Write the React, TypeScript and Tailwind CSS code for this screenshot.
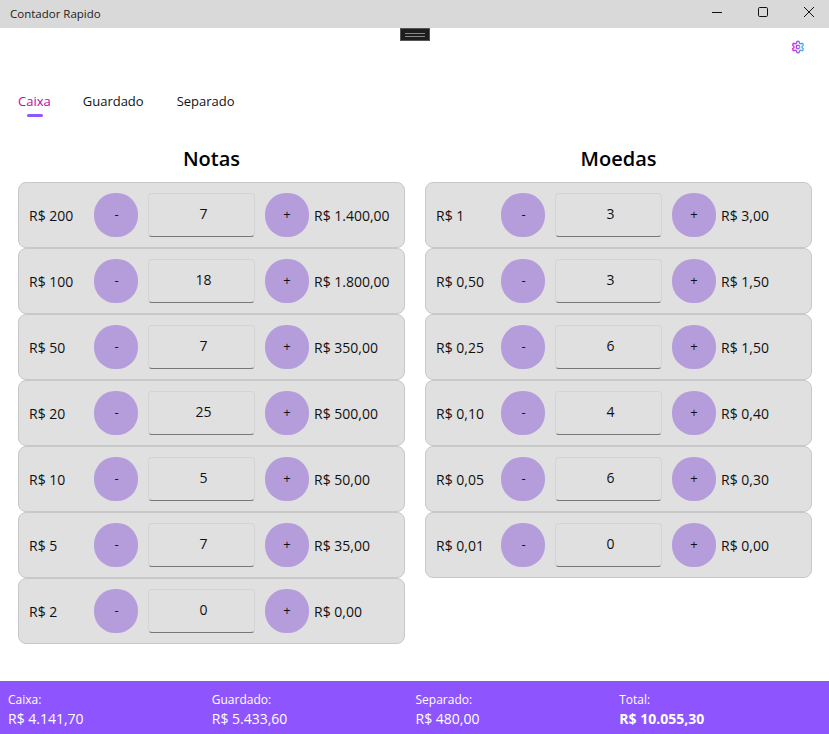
const notas = [
  { label: "R$ 200", count: "7", total: "R$ 1.400,00" },
  { label: "R$ 100", count: "18", total: "R$ 1.800,00" },
  { label: "R$ 50", count: "7", total: "R$ 350,00" },
  { label: "R$ 20", count: "25", total: "R$ 500,00" },
  { label: "R$ 10", count: "5", total: "R$ 50,00" },
  { label: "R$ 5", count: "7", total: "R$ 35,00" },
  { label: "R$ 2", count: "0", total: "R$ 0,00" },
];

const moedas = [
  { label: "R$ 1", count: "3", total: "R$ 3,00" },
  { label: "R$ 0,50", count: "3", total: "R$ 1,50" },
  { label: "R$ 0,25", count: "6", total: "R$ 1,50" },
  { label: "R$ 0,10", count: "4", total: "R$ 0,40" },
  { label: "R$ 0,05", count: "6", total: "R$ 0,30" },
  { label: "R$ 0,01", count: "0", total: "R$ 0,00" },
];

const totals = [
  { label: "Caixa:", value: "R$ 4.141,70" },
  { label: "Guardado:", value: "R$ 5.433,60" },
  { label: "Separado:", value: "R$ 480,00" },
  { label: "Total:", value: "R$ 10.055,30", bold: true },
];

interface RowProps {
  label: string;
  count: string;
  total: string;
}

function Row({ label, count, total }: RowProps) {
  return (
    <div className="flex h-[66px] items-center rounded-[8px] border border-[#c8c8c8] bg-[#e0e0e0] pl-[10px] text-[14px] text-[#111]">
      <span className="w-[65px]">{label}</span>
      <button className="flex size-[44px] items-center justify-center rounded-[21px] bg-[#b59ddc] pl-[1px] text-[13px]">
        -
      </button>
      <div className="mx-[10px] flex h-[44px] w-[107px] items-center justify-center rounded-[4px] border border-[#d4d4d4] border-b-[#777] pb-[4px] pl-[4px] text-[14px]">
        {count}
      </div>
      <button className="flex size-[44px] items-center justify-center rounded-[21px] bg-[#b59ddc] text-[13px]">
        +
      </button>
      <span className="ml-[5px]">{total}</span>
    </div>
  );
}

function Column({ title, rows }: { title: string; rows: RowProps[] }) {
  return (
    <div className="flex flex-col">
      <h2 className="mb-[8px] h-[30px] text-center text-[20px] leading-[30px] font-semibold text-black">
        {title}
      </h2>
      {rows.map((row) => (
        <Row key={row.label} {...row} />
      ))}
    </div>
  );
}

function App() {
  return (
    <div className="relative flex h-[734px] w-[829px] flex-col overflow-hidden bg-white font-['Open_Sans',sans-serif]">
      <div className="flex h-[28px] shrink-0 items-center justify-between bg-[#d9d9d9] pl-[10px] text-[11.5px] text-[#222]">
        <span className="pb-[1px]">Contador Rapido</span>
        <div className="flex translate-x-[3px] items-center">
          <div className="flex h-[28px] w-[46px] items-center justify-center pb-[5px]">
            <svg width="10" height="10" viewBox="0 0 10 10" fill="none" stroke="#111" strokeWidth="1">
              <path d="M0 5.5h10" />
            </svg>
          </div>
          <div className="flex h-[28px] w-[46px] items-center justify-center pb-[5px]">
            <svg width="10" height="10" viewBox="0 0 10 10" fill="none" stroke="#111" strokeWidth="1">
              <rect x="0.5" y="0.5" width="9" height="9" rx="1.2" />
            </svg>
          </div>
          <div className="flex h-[28px] w-[46px] items-center justify-center pb-[5px]">
            <svg width="10" height="10" viewBox="0 0 10 10" fill="none" stroke="#111" strokeWidth="1">
              <path d="M0 0l10 10M10 0L0 10" />
            </svg>
          </div>
        </div>
      </div>

      {/* debug toolbar collapsed at the top of the window */}
      <div className="absolute top-[28px] left-[400px] flex h-[13px] w-[30px] items-center justify-center border border-[#555] bg-[#1e1e1e]">
        <div className="h-[4px] w-[20px] border-y border-[#888]" />
      </div>

      <div className="flex h-[40px] shrink-0 justify-end pt-[12px] pr-[24px]">
        <svg width="14" height="14" viewBox="0 0 24 24" fill="none" strokeWidth="2.4" stroke="url(#gear)">
          <defs>
            <linearGradient id="gear" x1="0" y1="0" x2="1" y2="0">
              <stop offset="0" stopColor="#e023e0" />
              <stop offset="0.5" stopColor="#8f5cff" />
              <stop offset="1" stopColor="#35c5f0" />
            </linearGradient>
          </defs>
          <path d="M12.22 2h-.44a2 2 0 0 0-2 2v.18a2 2 0 0 1-1 1.73l-.43.25a2 2 0 0 1-2 0l-.15-.08a2 2 0 0 0-2.73.73l-.22.38a2 2 0 0 0 .73 2.73l.15.1a2 2 0 0 1 1 1.72v.51a2 2 0 0 1-1 1.74l-.15.09a2 2 0 0 0-.73 2.73l.22.38a2 2 0 0 0 2.73.73l.15-.08a2 2 0 0 1 2 0l.43.25a2 2 0 0 1 1 1.73V20a2 2 0 0 0 2 2h.44a2 2 0 0 0 2-2v-.18a2 2 0 0 1 1-1.73l.43-.25a2 2 0 0 1 2 0l.15.08a2 2 0 0 0 2.73-.73l.22-.39a2 2 0 0 0-.73-2.73l-.15-.08a2 2 0 0 1-1-1.74v-.5a2 2 0 0 1 1-1.74l.15-.09a2 2 0 0 0 .73-2.73l-.22-.38a2 2 0 0 0-2.73-.73l-.15.08a2 2 0 0 1-2 0l-.43-.25a2 2 0 0 1-1-1.73V4a2 2 0 0 0-2-2z" />
          <circle cx="12" cy="12" r="3" />
        </svg>
      </div>

      <div className="flex h-[60px] shrink-0 pt-[24px] pl-[18px] text-[13px] text-[#111]">
        <div className="relative mr-[32px] text-[#c800a8]">
          Caixa
          <div className="absolute top-[22px] left-[9px] h-[3px] w-[16px] rounded-full bg-[#8f55ff]" />
        </div>
        <div className="mr-[33px]">Guardado</div>
        <div>Separado</div>
      </div>

      <div className="grid flex-1 grid-cols-2 items-start gap-[20px] pt-[16px] pr-[17px] pl-[18px]">
        <Column title="Notas" rows={notas} />
        <Column title="Moedas" rows={moedas} />
      </div>

      <div className="grid h-[53px] shrink-0 grid-cols-4 bg-[#8e55ff] pt-[11px] pr-[6px] pl-[8px] text-white">
        {totals.map((t) => (
          <div key={t.label} className="flex flex-col">
            <span className="text-[12px] leading-[16px]">{t.label}</span>
            <span className={`text-[14px] leading-[22px] ${t.bold ? "font-bold" : ""}`}>{t.value}</span>
          </div>
        ))}
      </div>
    </div>
  );
}

export default App;
